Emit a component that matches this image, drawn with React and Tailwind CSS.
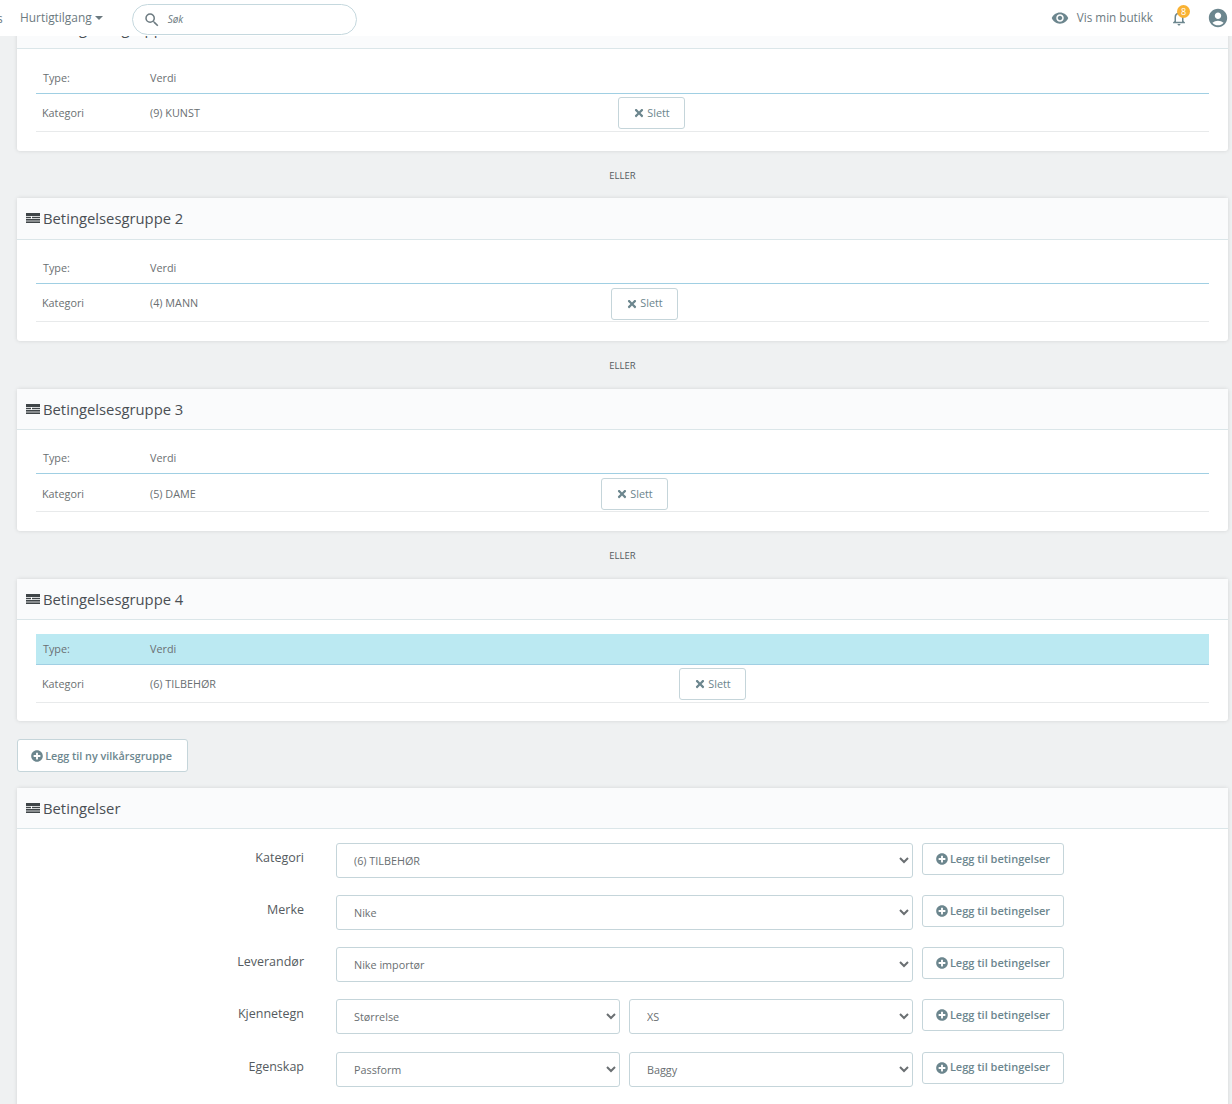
import React from 'react';
import { MdVisibility, MdAccountCircle, MdNotificationsNone, MdSearch } from 'react-icons/md';
import { FaTimes, FaPlusCircle } from 'react-icons/fa';

const font = { fontFamily: '"Open Sans", sans-serif' };

const groups = [
  { name: 'Betingelsesgruppe 1', value: '(9) KUNST', gap: 'w-[468px]' },
  { name: 'Betingelsesgruppe 2', value: '(4) MANN', gap: 'w-[461px]' },
  { name: 'Betingelsesgruppe 3', value: '(5) DAME', gap: 'w-[451px]' },
  { name: 'Betingelsesgruppe 4', value: '(6) TILBEHØR', gap: 'w-[529px]', active: true },
];

const TableIcon = () => (
  <svg width="14" height="10" viewBox="0 0 14 10" className="shrink-0 text-[#3f4548]" fill="currentColor">
    <rect x="0" y="0" width="14" height="3" />
    <rect x="0" y="3.8" width="5" height="1.4" />
    <rect x="6" y="3.8" width="8" height="1.4" />
    <rect x="0" y="6" width="14" height="1.6" />
    <rect x="0" y="8.4" width="14" height="1.6" />
  </svg>
);

const CardHeader = ({ title }) => (
  <div className="flex h-[41.3px] items-center gap-[3px] border-b border-[#dbe6e9] bg-[#fafbfc] pl-[9px] text-[14.8px] text-[#4a4f54]">
    <TableIcon />
    <span>{title}</span>
  </div>
);

const GroupCard = ({ group }) => (
  <div className="rounded-[3px] bg-white shadow-[0_0_4px_rgba(0,0,0,0.12)]">
    <CardHeader title={group.name} />
    <div className="px-[19px] pt-[13.7px] pb-[18.8px] text-[10.8px] text-[#6a6f72]">
      <div className={`flex h-[30.8px] items-center border-b border-[#a0cfe3] pl-[7px] ${group.active ? 'bg-[#bbe9f2]' : ''}`}>
        <span className="w-[107px]">Type:</span>
        <span>Verdi</span>
      </div>
      <div className="flex h-[38px] items-center border-b border-[#e8eaeb] pl-[6px] pt-[2px]">
        <span className="w-[108px]">Kategori</span>
        <span className={group.gap}>{group.value}</span>
        <button className="flex h-[32px] w-[67px] items-center justify-center gap-[2px] rounded-[3px] border border-[#c5d5da] bg-white text-[#6c868e]">
          <FaTimes className="text-[12px]" />
          Slett
        </button>
      </div>
    </div>
  </div>
);

const Eller = () => (
  <div className="flex h-[47.7px] items-center justify-center pt-[3px] text-[9.5px] text-[#555b60]">ELLER</div>
);

const AddButton = () => (
  <button className="flex h-[32px] w-[142px] shrink-0 items-center justify-center gap-[2px] rounded-[3px] border border-[#c5d5da] bg-white text-[11px] font-semibold text-[#6c868e]">
    <FaPlusCircle className="text-[12px]" />
    Legg til betingelser
  </button>
);

const Select = ({ value, className }) => (
  <select
    defaultValue={value}
    style={font}
    className={`h-[35px] rounded-[3px] border border-[#c5d5da] bg-white pl-[13px] text-[10.8px] text-[#6a6f72] ${className}`}
  >
    <option>{value}</option>
  </select>
);

const rows = [
  { label: 'Kategori', values: ['(6) TILBEHØR'] },
  { label: 'Merke', values: ['Nike'] },
  { label: 'Leverandør', values: ['Nike importør'] },
  { label: 'Kjennetegn', values: ['Størrelse', 'XS'] },
  { label: 'Egenskap', values: ['Passform', 'Baggy'] },
];

const ConditionRow = ({ row }) => (
  <div className="flex h-[52.1px] items-start">
    <label className="w-[288px] pr-[1px] text-right text-[12.5px] leading-[30px] text-[#555b60]">{row.label}</label>
    <div className="ml-[31px] flex w-[577px] gap-[9px]">
      {row.values.map((v) => (
        <Select key={v} value={v} className={row.values.length > 1 ? 'w-[284px]' : 'w-full'} />
      ))}
    </div>
    <div className="ml-[9px]">
      <AddButton />
    </div>
  </div>
);

export default function App() {
  return (
    <div style={font} className="relative h-[1104px] overflow-hidden bg-[#eff1f2]">
      {/* top bar lies over the scrolled content */}
      <header className="absolute inset-x-0 top-0 z-10 flex h-[36px] items-center bg-white text-[11.9px] text-[#6c7a80]">
        <span className="absolute left-[-3px] top-[10px]">s</span>
        <span className="ml-[20px] flex items-center gap-[3px]">
          Hurtigtilgang
          <span className="mt-[1px] h-0 w-0 border-x-[4px] border-t-[4px] border-x-transparent border-t-[#6c7a80]" />
        </span>
        <div className="ml-[29px] mt-[3px] flex h-[31px] w-[225px] items-center rounded-full border border-[#c5d8de] pl-[10px]">
          <MdSearch className="text-[18px]" />
          <span className="ml-[7px] text-[10px] italic">Søk</span>
        </div>
        <MdVisibility className="ml-auto text-[18px] text-[#6c868e]" />
        <span className="ml-[8px] text-[11.7px]">Vis min butikk</span>
        <div className="relative ml-[17px]">
          <MdNotificationsNone className="text-[18px] text-[#6c868e]" />
          <span className="absolute left-[7px] top-[-4px] flex h-[13px] w-[13px] items-center justify-center rounded-full bg-[#f9b233] text-[9px] text-white">8</span>
        </div>
        <MdAccountCircle className="ml-[19px] mr-[3px] text-[22px] text-[#6c868e]" />
      </header>

      <main className="ml-[17px] mr-[4px] pt-[8px]">
        {groups.map((g, i) => (
          <div key={g.name}>
            {i > 0 && <Eller />}
            <GroupCard group={g} />
          </div>
        ))}

        <button className="mt-[18px] flex h-[32.5px] w-[171px] items-center justify-center gap-[2px] rounded-[3px] border border-[#c5d5da] bg-white pr-[2px] text-[10.8px] font-semibold text-[#6c868e]">
          <FaPlusCircle className="text-[12px]" />
          Legg til ny vilkårsgruppe
        </button>

        <div className="mt-[16px] rounded-[3px] bg-white pb-[40px] shadow-[0_0_4px_rgba(0,0,0,0.12)]">
          <CardHeader title="Betingelser" />
          <div className="pt-[14px]">
            {rows.map((r) => (
              <ConditionRow key={r.label} row={r} />
            ))}
          </div>
        </div>
      </main>
    </div>
  );
}
